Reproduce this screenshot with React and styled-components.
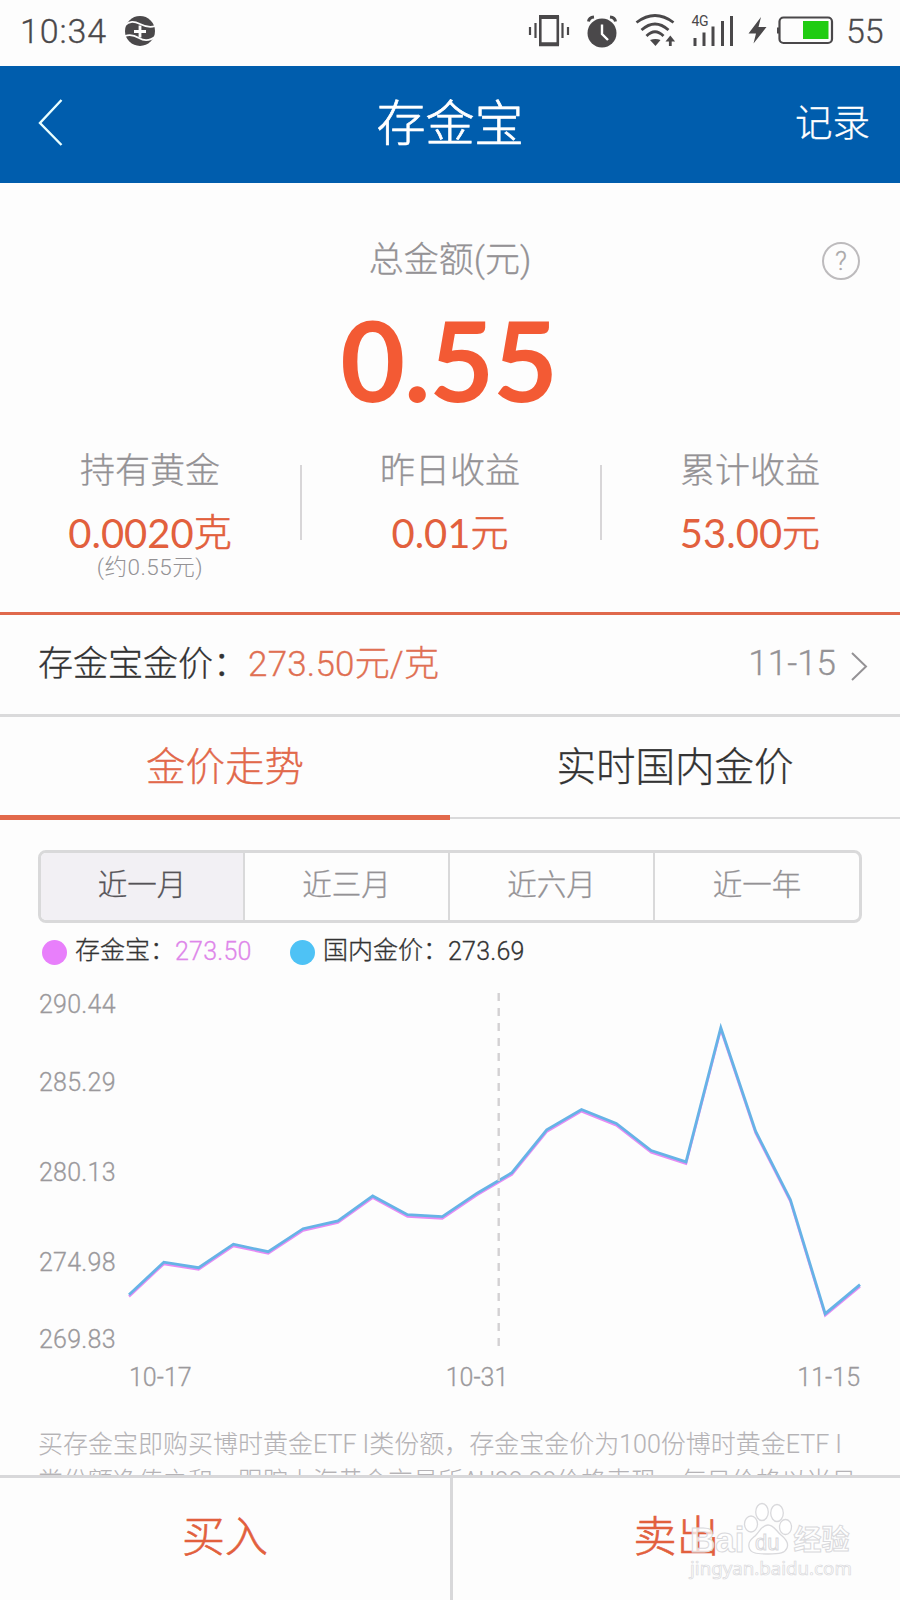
import React from 'react';
import styled, { createGlobalStyle } from 'styled-components';

const GlobalStyle = createGlobalStyle`
  * {
    box-sizing: border-box;
  }
  body {
    margin: 0;
    background: #fdfdfd;
    font-family: Roboto, 'Noto Sans CJK SC', sans-serif;
    font-weight: 300;
    -webkit-text-stroke: 0.3px currentcolor;
  }
`;

const Page = styled.div`
  position: relative;
  display: flex;
  flex-direction: column;
  width: 900px;
  height: 1600px;
  overflow: hidden;
  background: #fdfdfd;
`;

const StatusBar = styled.div`
  display: flex;
  align-items: center;
  flex: 0 0 66px;
  padding: 0 16px 4px 20px;
  color: #4a484a;
  font-size: 34px;
`;
const Clock = styled.span`
  width: 105px;
  letter-spacing: 0.9px;
`;
const StatusIcons = styled.div`
  display: flex;
  margin-left: auto;
  align-items: center;
`;
const StatusIcon = styled.svg`
  display: block;
  width: ${props => props.$width}px;
  height: 44px;
  margin-right: ${props => props.$gap || 0}px;
  overflow: visible;
`;
const Percent = styled(Clock)`
  width: 38px;
  letter-spacing: 0;
`;

const Header = styled.header`
  display: grid;
  grid-template-columns: 200px 1fr 200px;
  align-items: center;
  flex: 0 0 117px;
  padding: 0 30px 5px 38px;
  background: #005dad;
  color: #fff;
`;
const Title = styled.h1`
  margin: 0;
  padding: 5px 8px 0 0;
  text-align: center;
  font-size: 49px;
  font-weight: 300;
  line-height: 60px;
  -webkit-text-stroke-width: 0.7px;
`;
const RecordLink = styled.a`
  padding-top: 2px;
  text-align: right;
  font-size: 37.5px;
  line-height: 50px;
`;

const Summary = styled.section`
  position: relative;
  display: flex;
  flex-direction: column;
  align-items: center;
  flex: 0 0 432px;
  padding-top: 52px;
  border-bottom: 3px solid #e0694c;
`;
const SummaryLabel = styled.div`
  color: #949295;
  font-size: 35px;
  line-height: 52px;
`;
const Amount = styled.div`
  height: 154px;
  margin-right: 3px;
  padding-top: 4px;
  color: #f35a34;
  font-family: Lato, sans-serif;
  font-size: 112px;
  font-weight: 700;
  line-height: 136px;
  letter-spacing: -1.3px;
  -webkit-text-stroke-width: 0;
`;
const Help = styled.button`
  position: absolute;
  top: 59px;
  right: 40px;
  width: 38px;
  height: 38px;
  padding: 0;
  border: 2px solid #bdbbbd;
  border-radius: 50%;
  background: none;
  color: #aaa8aa;
  font: 300 26px/35px Roboto, sans-serif;
`;
const Stats = styled.div`
  display: grid;
  grid-template-columns: repeat(3, 300px);
  margin-top: 3px;
`;
const Stat = styled.div`
  display: flex;
  flex-direction: column;
  align-items: center;
  height: 150px;
`;
const StatDivider = styled.i`
  position: absolute;
  left: ${props => props.$left}px;
  top: 282px;
  width: 2px;
  height: 75px;
  background: #d8d6d8;
`;
const StatName = styled.span`
  margin-top: 6px;
  color: #949295;
  font-size: 35px;
  line-height: 44px;
`;
const StatValue = styled.span`
  height: 50px;
  margin-top: 14px;
  color: #e2603d;
  font-family: Lato, 'Noto Sans CJK SC', sans-serif;
  font-size: 40px;
  font-weight: 400;
  line-height: 50px;
  -webkit-text-stroke-width: 0;
`;
const Unit = styled.span`
  position: relative;
  top: -2px;
  font-size: 38px;
  font-weight: 300;
  -webkit-text-stroke-width: 0.6px;
`;
const StatNote = styled.span`
  margin-top: -3px;
  color: #949295;
  font-size: 22.5px;
  line-height: 24px;
  letter-spacing: 0.5px;
  -webkit-text-stroke-width: 0;
`;

const PriceRow = styled.div`
  display: flex;
  align-items: center;
  flex: 0 0 102px;
  padding: 0 32px 3px 38px;
  border-bottom: 3px solid #dadadb;
  color: #333;
  font-size: 35px;
`;
const PriceText = styled.span`
  padding-bottom: 6px;
  color: ${props => (props.$price ? '#e07053' : 'inherit')};
  letter-spacing: ${props => (props.$price ? 0.2 : 0)}px;
`;
const PriceDate = styled.span`
  margin: 0 14px 0 auto;
  color: #949295;
`;
const Chevron = styled.svg`
  width: 18px;
  height: 34px;
  margin-top: 6px;
`;

const Tabs = styled.nav`
  display: flex;
  flex: 0 0 103px;
`;
const Tab = styled.div`
  flex: 1;
  height: ${props => (props.$active ? 103 : 102)}px;
  border-bottom: ${props => (props.$active ? '5px solid #e2694b' : '2px solid #dadadb')};
  color: ${props => (props.$active ? '#e2694b' : '#333')};
  text-align: center;
  font-size: 39.5px;
  line-height: 101px;
`;

const Ranges = styled.div`
  display: grid;
  grid-template-columns: 204px 205px 205px 1fr;
  flex: 0 0 73px;
  margin: 30px 38px 0;
  border: 3px solid #d9d9da;
  border-radius: 8px;
  overflow: hidden;
`;
const Range = styled.div`
  border-right: ${props => (props.$last ? 0 : 2)}px solid #d9d9da;
  background: ${props => (props.$active ? '#f2f0f4' : 'transparent')};
  color: ${props => (props.$active ? '#555357' : '#949295')};
  text-align: center;
  font-size: 29.5px;
  line-height: 65px;
`;

const Legend = styled.div`
  display: flex;
  align-items: center;
  flex: 0 0 36px;
  margin-top: 11px;
  padding-left: 42px;
  color: #333;
  font-size: 25px;
  line-height: 30px;
`;
const LegendItem = styled.span`
  display: flex;
  align-items: center;
  width: 248px;
`;
const Dot = styled.i`
  width: 25px;
  height: 25px;
  margin-right: 8px;
  border-radius: 50%;
  background: ${props => props.$color};
`;
const LegendName = styled.span`
  padding-bottom: 3px;
`;
const LegendValue = styled.span`
  padding-bottom: 1px;
  color: ${props => props.$color || 'inherit'};
  letter-spacing: 0.2px;
`;

const ChartArea = styled.div`
  display: grid;
  grid-template-columns: 91px 733px;
  grid-template-rows: 363px 28px;
  flex: 0 0 391px;
  margin: 21px 38px 0;
  color: #9b999c;
  font-size: 25px;
  line-height: 28px;
`;
const PriceAxis = styled.div`
  display: grid;
  grid-template-rows: 47px 90px 90px 90px 46px;
  align-items: center;
  padding-left: 1px;
  letter-spacing: 0.25px;
  span:first-child {
    align-self: start;
  }
  span:last-child {
    align-self: end;
  }
`;
const Plot = styled.svg`
  display: block;
  width: 733px;
  height: 363px;
  overflow: visible;
`;
const DateAxis = styled.div`
  grid-column: 2;
  display: grid;
  grid-template-columns: 1fr auto 1fr;
  margin-top: 10px;
  span:nth-child(2) {
    margin-right: 37px;
  }
  span:last-child {
    text-align: right;
    padding-right: 2px;
  }
`;

const Note = styled.p`
  flex: 0 0 49px;
  margin: 44px 30px 0 38px;
  overflow: hidden;
  color: #b5b3b6;
  font-size: 25px;
  line-height: 37px;
  white-space: nowrap;
  -webkit-text-stroke-width: 0.1px;
`;

const Actions = styled.footer`
  display: grid;
  grid-template-columns: 1fr 1fr;
  flex: 1;
  border-top: 3px solid #d8d8da;
`;
const Action = styled.div`
  border-left: ${props => (props.$divided ? 3 : 0)}px solid #d8d8da;
  color: #e2603d;
  text-align: center;
  font-size: 43px;
  line-height: 118px;
  -webkit-text-stroke-width: 0.6px;
`;

const Watermark = styled.div`
  position: absolute;
  left: 690px;
  top: 1502px;
  width: 164px;
  color: rgba(255, 255, 255, 0.75);
  font-family: 'Liberation Sans', 'Noto Sans CJK SC', sans-serif;
  -webkit-text-stroke: 1px #d9d9dc;
`;
const Brand = styled.div`
  display: flex;
  align-items: flex-end;
  height: 54px;
  font-size: 35px;
  font-weight: 700;
  line-height: 32px;
`;
const BrandCn = styled.span`
  margin-left: 1px;
  font-size: 28px;
  line-height: 30px;
`;
const Site = styled.div`
  font-family: 'Noto Sans', sans-serif;
  font-size: 18.7px;
  font-weight: 400;
  line-height: 24px;
  -webkit-text-stroke-width: 0.7px;
`;
const Paw = styled.svg`
  width: 48px;
  height: 54px;
  overflow: visible;
`;

const STEP = 34.81;
const points = [
  303.7, 271.2, 276.7, 253.2, 260.7, 237.7, 229.9, 204.9, 223.7, 225.7, 202.2,
  181.7, 138.9, 118.5, 132.5, 159.5, 170.9, 36.7, 140.2, 208.7, 322.7, 293.7,
];
const toLine = (values, offset = 0) =>
  values.map((y, i) => `${(i * STEP).toFixed(1)},${y + offset}`).join(' ');

const ranges = ['近一月', '近三月', '近六月', '近一年'];
const prices = ['290.44', '285.29', '280.13', '274.98', '269.83'];

const Chart = () => (
  <ChartArea>
    <PriceAxis>
      {prices.map(price => <span key={price}>{price}</span>)}
    </PriceAxis>
    <Plot viewBox="0 0 733 363" fill="none">
      <polyline points={toLine(points, 1.8)} stroke="#e58cf5" strokeWidth="2.4" />
      <polyline points={toLine(points)} stroke="#66b3e6" strokeWidth="2.8" />
      <path d="M369.7 2V356" stroke="#d3d1d3" strokeWidth="2.4" strokeDasharray="8 7" />
    </Plot>
    <DateAxis>
      <span>10-17</span>
      <span>10-31</span>
      <span>11-15</span>
    </DateAxis>
  </ChartArea>
);

const SystemIcons = () => (
  <StatusIcons>
    <StatusIcon $width={40} $gap={18} viewBox="529 10 40 44" fill="none" stroke="#4a484a">
      <path d="M530 28v8M535.5 24v15M562.5 24v15M568 28v8" strokeWidth="2.2" />
      <path d="M540.3 17v29M557.8 17v29" strokeWidth="2.6" />
      <path d="M539 18h20M539 45.3h20" strokeWidth="4" />
    </StatusIcon>
    <StatusIcon $width={30} $gap={19} viewBox="587 10 30 44">
      <circle cx="602" cy="34" r="14.5" fill="#4a484a" />
      <path d="M588.5 22.5q.5-4 5.5-4.5M610 18q5 .5 5.5 4.5" stroke="#4a484a" strokeWidth="3" fill="none" />
      <path d="M602 25.5v9.500l6 6" stroke="#fff" strokeWidth="2.4" fill="none" />
    </StatusIcon>
    <StatusIcon $width={39} $gap={17} viewBox="636 10 39 44" fill="none" stroke="#4a484a" strokeWidth="2.8">
      <path d="M636.5 23.5q18.500-14 37 0M641.5 31q13.500-12 27 0M646.5 37q8.500-8.500 17 0" />
      <path d="M650 41q5.500-2 10.500 0l-5 6z" fill="#4a484a" stroke="none" />
      <path d="M670.3 47v-8" />
      <path d="M665.5 42.500l4.800-6 4.800 6z" fill="#4a484a" stroke="none" />
    </StatusIcon>
    <StatusIcon $width={42} $gap={15} viewBox="692 10 42 44" fill="#4a484a">
      <text x="691.5" y="27" fontSize="14" fontWeight="400" letterSpacing="-0.4">4G</text>
      <path d="M693.5 39h3v8h-3zM702.5 33.5h3V47h-3zM711.5 27.5h3V47h-3zM721 22h3v25h-3zM730 17h3v30h-3z" />
    </StatusIcon>
    <StatusIcon $width={18} $gap={10} viewBox="749 10 18 44" fill="#4a484a">
      <path d="M761 18l-12.500 16.500h7.500l-2.500 10L766.500 28h-8z" />
    </StatusIcon>
    <StatusIcon $width={56} $gap={13} viewBox="777 10 56 44">
      <rect x="779.5" y="18.5" width="52.5" height="25.5" rx="4" fill="none" stroke="#4a484a" strokeWidth="2.2" />
      <path d="M777 28.500h3v6h-3z" fill="#4a484a" />
      <path d="M803 22h25.500v18H803z" fill="#20cc12" />
    </StatusIcon>
    <Percent>55</Percent>
  </StatusIcons>
);

const App = () => (
  <Page>
    <GlobalStyle />
    <StatusBar>
      <Clock>10:34</Clock>
      <StatusIcon $width={30} viewBox="0 -7 30 44">
        <circle cx="15" cy="15" r="15" fill="#4a484a" />
        <path d="M-1 10C5 4.500 9 5 15 8s10 4 15 2M0 20c5-2 9-1 14 2s11 3 17-2" fill="none" stroke="#fdfdfd" strokeWidth="1.8" />
        <path d="M15 9.500v12M9 15.500h12" stroke="#fdfdfd" strokeWidth="2.8" />
      </StatusIcon>
      <SystemIcons />
    </StatusBar>
    <Header>
      <svg width="26" height="48" viewBox="0 0 26 48" fill="none" stroke="#e9ffff" strokeWidth="2.4">
        <path d="M23.500 2L2 25l21.500 22" />
      </svg>
      <Title>存金宝</Title>
      <RecordLink>记录</RecordLink>
    </Header>
    <Summary>
      <SummaryLabel>总金额(元)</SummaryLabel>
      <Help>?</Help>
      <Amount>0.55</Amount>
      <Stats>
        <Stat>
          <StatName>持有黄金</StatName>
          <StatValue>0.0020<Unit>克</Unit></StatValue>
          <StatNote>(约0.55元)</StatNote>
        </Stat>
        <Stat>
          <StatName>昨日收益</StatName>
          <StatValue>0.01<Unit>元</Unit></StatValue>
        </Stat>
        <Stat>
          <StatName>累计收益</StatName>
          <StatValue>53.00<Unit>元</Unit></StatValue>
        </Stat>
      </Stats>
      <StatDivider $left={300} />
      <StatDivider $left={600} />
    </Summary>
    <PriceRow>
      <PriceText>存金宝金价：</PriceText>
      <PriceText $price>273.50元/克</PriceText>
      <PriceDate>11-15</PriceDate>
      <Chevron viewBox="0 0 18 34" fill="none" stroke="#949295" strokeWidth="2">
        <path d="M2 4l14 13.500L2 31" />
      </Chevron>
    </PriceRow>
    <Tabs>
      <Tab $active>金价走势</Tab>
      <Tab>实时国内金价</Tab>
    </Tabs>
    <Ranges>
      {ranges.map((range, i) => (
        <Range key={range} $active={i === 0} $last={i === 3}>{range}</Range>
      ))}
    </Ranges>
    <Legend>
      <LegendItem>
        <Dot $color="#e87ffb" />
        <LegendName>存金宝：</LegendName>
        <LegendValue $color="#de86ea">273.50</LegendValue>
      </LegendItem>
      <LegendItem>
        <Dot $color="#4ec2f5" />
        <LegendName>国内金价：</LegendName>
        <LegendValue>273.69</LegendValue>
      </LegendItem>
    </Legend>
    <Chart />
    <Note>
      买存金宝即购买博时黄金ETF I类份额，存金宝金价为100份博时黄金ETF I<br />
      类份额净值之和，跟踪上海黄金交易所AU99.99价格表现，每日价格以当日
    </Note>
    <Actions>
      <Action>买入</Action>
      <Action $divided>卖出</Action>
    </Actions>
    <Watermark>
      <Brand>
        Bai
        <Paw viewBox="0 0 48 54" fill="rgba(255,255,255,.75)" stroke="#d9d9dc" strokeWidth="1.3">
          <ellipse cx="7" cy="22" rx="6.5" ry="8" />
          <ellipse cx="18" cy="10" rx="6.3" ry="8.5" />
          <ellipse cx="33" cy="11" rx="6.3" ry="8.5" />
          <ellipse cx="41.5" cy="25" rx="6" ry="7.5" />
          <path d="M24 23c6 0 8 6 13 10s8 8 6 13-7 6-19 6-18-1-19-7 3-8 7-12 6-10 12-10z" />
          <text x="11" y="48" fontSize="22" fontWeight="400" strokeWidth="1">du</text>
        </Paw>
        <BrandCn>经验</BrandCn>
      </Brand>
      <Site>jingyan.baidu.com</Site>
    </Watermark>
  </Page>
);

export default App;
